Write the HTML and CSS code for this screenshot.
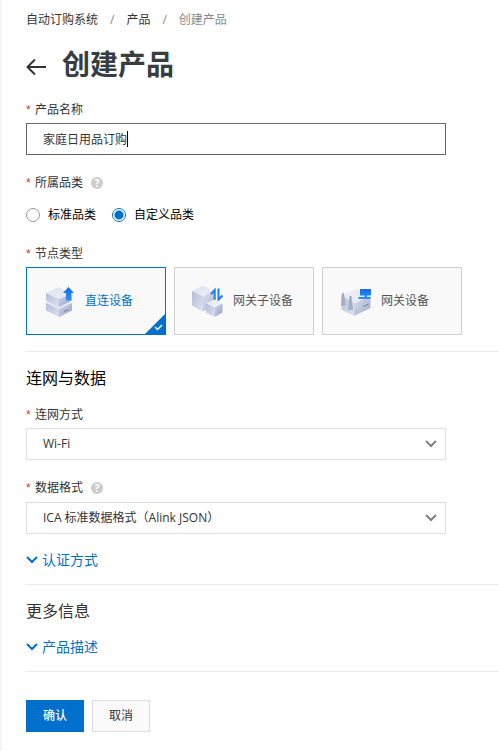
FILE: index.html
```html
<!DOCTYPE html>
<html lang="zh-CN">
<head>
    <meta charset="UTF-8">
    <meta name="viewport" content="width=device-width, initial-scale=1.0">
    <title>创建产品</title>
    <link rel="stylesheet" href="styles.css">
</head>
<body>
    <main class="page">
        <nav class="breadcrumb">
            <a href="#">自动订购系统</a>
            <span class="separator">/</span>
            <a href="#">产品</a>
            <span class="separator">/</span>
            <span class="current">创建产品</span>
        </nav>

        <header class="title-bar">
            <a class="back" href="#" aria-label="返回">
                <svg width="22" height="20" viewBox="0 0 22 20"><path d="M9 2.5 L1.5 10 L9 17.5 M2 10 H20" fill="none" stroke="#333" stroke-width="2"/></svg>
            </a>
            <h1>创建产品</h1>
        </header>

        <form>
            <div class="field">
                <label class="field-label" for="name"><span class="required">*</span>产品名称</label>
                <div class="control">
                    <input type="text" id="name" class="text-input" value="家庭日用品订购">
                    <span class="caret"></span>
                </div>
            </div>

            <div class="field" role="radiogroup" aria-labelledby="categoryLabel">
                <div class="field-label has-help" id="categoryLabel">
                    <span class="required">*</span>所属品类
                    <span class="help">?</span>
                </div>
                <div class="radio-group">
                    <label class="radio-item"><input type="radio" name="category">标准品类</label>
                    <label class="radio-item"><input type="radio" name="category" checked>自定义品类</label>
                </div>
            </div>

            <div class="field" role="radiogroup" aria-labelledby="nodeLabel">
                <div class="field-label" id="nodeLabel"><span class="required">*</span>节点类型</div>
                <div class="card-group">
                    <label class="card selected">
                        <input type="radio" name="node" checked>
                        <svg class="card-icon" viewBox="0 0 32 32">
                            <defs>
                                <linearGradient id="top" x1="0" y1="0" x2="1" y2="1"><stop offset="0" stop-color="#dde1ee"/><stop offset="1" stop-color="#eff1f8"/></linearGradient>
                                <linearGradient id="left" x1="0" y1="0" x2="1" y2="1"><stop offset="0" stop-color="#b4bcd6"/><stop offset="1" stop-color="#dde2f0"/></linearGradient>
                                <linearGradient id="right" x1="0" y1="0" x2="1" y2="1"><stop offset="0" stop-color="#d3d9ea"/><stop offset="1" stop-color="#939fc2"/></linearGradient>
                                <linearGradient id="blue" x1="0" y1="0" x2="0" y2="1"><stop offset="0" stop-color="#1668e8"/><stop offset="1" stop-color="#2a91ff"/></linearGradient>
                            </defs>
                            <path d="M3 18 L16 12 L29 18 L16 24Z" fill="#e3e7f3"/>
                            <path d="M3 18 L16 24 V32 L3 25.5Z" fill="url(#left)"/>
                            <path d="M29 18 L16 24 V32 L29 25.5Z" fill="url(#right)"/>
                            <path d="M3 8 L16 14 V22 L3 15.5Z" fill="url(#left)"/>
                            <path d="M29 8 L16 14 V22 L29 15.5Z" fill="url(#right)"/>
                            <path d="M3 8 L15.5 2 L29 8 L16 14Z" fill="url(#top)"/>
                            <path d="M21 26.5 L25 24.5" stroke="#6e7a9e"/>
                            <path d="M25.5 2 L31 8 H28 V15.5 H23 V8 H20Z" fill="url(#blue)"/>
                        </svg>
                        <span>直连设备</span>
                        <svg class="check" viewBox="0 0 20 20"><path d="M20 0 V20 H0Z" fill="#0070cc"/><path d="M10 13 L12.5 15.5 L17 11" fill="none" stroke="#fff" stroke-width="1.5"/></svg>
                    </label>
                    <label class="card">
                        <input type="radio" name="node">
                        <svg class="card-icon" viewBox="0 0 32 32">
                            <path d="M1 6 L12 .5 L23 6 L12 11.5Z" fill="url(#top)"/>
                            <path d="M1 6 L12 11.5 V26.5 L1 20.5Z" fill="url(#left)"/>
                            <path d="M23 6 L12 11.5 V26.5 L23 20.5Z" fill="url(#right)" opacity=".75"/>
                            <path d="M23.7 16 V5 L20 9 M27.5 3.5 V14.5 L31.5 10.5" fill="none" stroke="#1c7df5" stroke-width="2"/>
                            <path d="M15 18.5 L23.5 14.5 L31.5 18.5 L23.5 22.5Z" fill="#eceff7"/>
                            <path d="M15 18.5 L23.5 22.5 V32 L15 27.5Z" fill="url(#left)"/>
                            <path d="M31.5 18.5 L23.5 22.5 V32 L31.5 27.5Z" fill="url(#right)"/>
                        </svg>
                        <span>网关子设备</span>
                    </label>
                    <label class="card">
                        <input type="radio" name="node">
                        <svg class="card-icon" viewBox="0 0 32 32">
                            <path d="M2.5 10 L18 4 L31.5 11 L15 18.5Z" fill="#e9ecf5"/>
                            <path d="M2.5 10 L15 18.5 V31 L2.5 24.5Z" fill="url(#left)"/>
                            <path d="M31.5 11 L15 18.5 V31 L31.5 23Z" fill="url(#right)" opacity=".85"/>
                            <path d="M3 8 H5 L6.5 20 L2 21Z M10.5 11 H12.5 L14 25 H9Z" fill="#a3adca"/>
                            <path d="M24.5 21.5 L29.5 19" stroke="#6e7a9e"/>
                            <path d="M21 4 H32 V10.5 H28 V12 H31.5 V14 H19.5 V12 H25.5 V10.5 H21Z" fill="url(#blue)"/>
                        </svg>
                        <span>网关设备</span>
                    </label>
                </div>
            </div>

            <section class="section">
                <h2 class="dark">连网与数据</h2>
                <div class="field">
                    <label class="field-label" for="network"><span class="required">*</span>连网方式</label>
                    <div class="control">
                        <select id="network"><option>Wi-Fi</option></select>
                        <svg class="arrow" viewBox="0 0 12 8"><path d="M1 1 L6 6 L11 1"/></svg>
                    </div>
                </div>
                <div class="field">
                    <div class="field-label has-help">
                        <label for="format"><span class="required">*</span>数据格式</label>
                        <span class="help">?</span>
                    </div>
                    <div class="control">
                        <select id="format"><option>ICA 标准数据格式（Alink JSON）</option></select>
                        <svg class="arrow" viewBox="0 0 12 8"><path d="M1 1 L6 6 L11 1"/></svg>
                    </div>
                </div>
                <a class="toggle" href="#">
                    <svg viewBox="0 0 12 8"><path d="M1 1 L6 6 L11 1"/></svg>认证方式
                </a>
            </section>

            <section class="section">
                <h2>更多信息</h2>
                <a class="toggle" href="#">
                    <svg viewBox="0 0 12 8"><path d="M1 1 L6 6 L11 1"/></svg>产品描述
                </a>
            </section>

            <div class="actions">
                <button type="submit" class="btn primary">确认</button>
                <button type="button" class="btn">取消</button>
            </div>
        </form>
    </main>
</body>
</html>
```
FILE: styles.css
```css
* {
    margin: 0;
    padding: 0;
    box-sizing: border-box;
}

body {
    min-height: 100vh;
    border-left: 2px solid #f5f5f5;
    background: #fff;
    color: #333;
    font-family: "Open Sans", "Noto Sans CJK SC", sans-serif;
    font-size: 12px;
    line-height: 18px;
}

input,
select,
button {
    font: inherit;
    color: inherit;
}

a {
    color: inherit;
    text-decoration: none;
}

svg {
    display: block;
    flex: none;
}

.page {
    padding: 11px 0 18px 24px;
}

.breadcrumb {
    display: flex;
    gap: 12px;
}

.separator,
.current {
    color: #888;
}

.title-bar {
    display: flex;
    align-items: center;
    gap: 14px;
    margin: 15px 0 17px;
}

.back {
    padding-top: 6px;
}

h1 {
    color: #373d41;
    font-size: 28px;
    line-height: 40px;
}

.field {
    margin-bottom: 16px;
}

.field + .field {
    margin-top: 18px;
}

.field-label {
    display: flex;
    align-items: center;
    margin-bottom: 4px;
}

.has-help {
    line-height: 20px;
}

.required {
    display: inline-block;
    width: 9px;
    color: #d93026;
    font-family: "Liberation Sans", Arial, sans-serif;
}

.help {
    width: 12px;
    height: 12px;
    margin-left: 8px;
    border-radius: 50%;
    background: #ccc;
    color: #fff;
    font-size: 10px;
    font-weight: bold;
    line-height: 12px;
    text-align: center;
}

.control {
    position: relative;
    max-width: 420px;
}

.text-input,
select {
    display: block;
    width: 100%;
    height: 32px;
    padding: 0 16px;
    border: 1px solid #ddd;
    border-radius: 0;
    background: #fff;
    appearance: none;
    outline: none;
}

.text-input {
    border-color: #666;
}

.caret {
    position: absolute;
    top: 8px;
    left: calc(17px + 7em);
    width: 1px;
    height: 16px;
    background: #000;
}

.arrow {
    position: absolute;
    top: 12px;
    right: 9px;
    width: 12px;
    fill: none;
    stroke: #808080;
    stroke-width: 2;
    pointer-events: none;
}

.radio-group {
    display: flex;
    gap: 16px;
    padding-top: 6px;
    color: #000;
    line-height: 24px;
}

.radio-item {
    display: flex;
    align-items: center;
    gap: 8px;
}

.radio-item input {
    width: 14px;
    height: 14px;
    border: 1px solid #999;
    border-radius: 50%;
    background: #fff;
    appearance: none;
}

.radio-item input:checked {
    border-color: #0070cc;
    background: radial-gradient(circle, #0070cc 4px, #fff 5px);
}

.card-group {
    display: flex;
    flex-wrap: wrap;
    gap: 8px;
}

.card {
    position: relative;
    display: flex;
    align-items: center;
    gap: 10px;
    width: 140px;
    height: 68px;
    padding: 0 16px;
    border: 1px solid #d0d0d0;
    background: #f9f9f9;
    color: #555;
    white-space: nowrap;
    cursor: pointer;
}

.card input {
    position: absolute;
    opacity: 0;
}

.card.selected {
    border-color: #0070cc;
    color: #0070cc;
}

.card-icon {
    width: 32px;
    height: 32px;
}

.check {
    position: absolute;
    right: 0;
    bottom: 0;
    width: 20px;
    height: 20px;
}

.section {
    margin-top: 14px;
    padding-top: 14px;
    border-top: 1px solid #ebebeb;
}

h2 {
    margin-bottom: 14px;
    font-size: 16px;
    font-weight: normal;
    line-height: 24px;
}

.dark {
    margin-bottom: 16px;
    color: #000;
}

.toggle {
    display: flex;
    align-items: center;
    gap: 4px;
    color: #0070cc;
    font-size: 14px;
    line-height: 20px;
}

.toggle svg {
    width: 12px;
    fill: none;
    stroke: #0070cc;
    stroke-width: 2;
}

.actions {
    display: flex;
    gap: 8px;
    margin-top: 14px;
    padding-top: 28px;
    border-top: 1px solid #ebebeb;
}

.btn {
    height: 32px;
    padding: 0 16px;
    border: 1px solid #ddd;
    background: #fafafa;
    cursor: pointer;
}

.primary {
    border-color: #0070cc;
    background: #0070cc;
    color: #fff;
    font-weight: 500;
}
```
